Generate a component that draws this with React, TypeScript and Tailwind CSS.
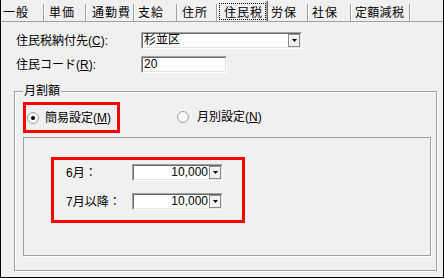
import React from "react";

const font = "font-['Liberation_Sans','Noto_Sans_CJK_JP',sans-serif]";

function Sep() {
  return <span className="w-[2px] h-[17px] self-end border-l border-[#a0a0a0] bg-white" />;
}

function Arrow() {
  return (
    <svg width="5" height="3" viewBox="0 0 5 3">
      <polygon points="0,0 5,0 2.5,3" fill="black" />
    </svg>
  );
}

function DropBtn() {
  return (
    <div className="w-[12px] h-full flex items-center justify-center bg-[#f0f0f0] border border-[#8a8a8a] shadow-[inset_1px_1px_0_white]">
      <Arrow />
    </div>
  );
}

function Field({
  className,
  children,
  btn,
  right,
}: {
  className: string;
  children: React.ReactNode;
  btn?: boolean;
  right?: boolean;
}) {
  return (
    <div
      className={`${className} h-[17px] border border-t-[#a0a0a0] border-l-[#a0a0a0] border-r-white border-b-white`}
    >
      <div className="h-full flex border border-t-[#696969] border-l-[#696969] border-r-[#e3e3e3] border-b-[#e3e3e3] bg-white">
        <div
          className={`flex-1 leading-[13px] px-[1px] ${right ? "text-right" : ""}`}
        >
          {children}
        </div>
        {btn && <DropBtn />}
      </div>
    </div>
  );
}

function Radio({ checked }: { checked?: boolean }) {
  return (
    <svg width="12" height="12" viewBox="0 0 12 12">
      <circle cx="6" cy="6" r="5.5" fill="#fcfcfc" stroke="#a0a0a0" />
      <circle cx="6" cy="6" r="4.5" fill="none" stroke="#e8e8e8" />
      {checked && <circle cx="6" cy="6" r="2" fill="black" />}
    </svg>
  );
}

export default function App() {
  return (
    <div
      className={`w-[444px] h-[278px] bg-[#f0f0f0] border-l border-r border-b border-black text-[12px] leading-[14px] text-black overflow-hidden ${font}`}
    >
      {/* tabs */}
      <div className="flex h-[22px] border-b border-[#a0a0a0] tracking-[1px] whitespace-nowrap">
        <div className="w-[42px] pl-[2px] pt-[6px]">一般</div>
        <Sep />
        <div className="w-[40px] pl-[4px] pt-[6px]">単価</div>
        <Sep />
        <div className="w-[46px] pl-[5px] pt-[6px]">通勤費</div>
        <Sep />
        <div className="w-[41px] pl-[3px] pt-[6px]">支給</div>
        <Sep />
        <div className="w-[38px] pl-[4px] pt-[6px]">住所</div>
        <Sep />
        <div className="w-[48px] pl-[1px] pt-[3px]">
          <div className="h-[17px] w-[47px] border border-dotted border-black pl-[4px] pt-[2px]">
            住民税
          </div>
        </div>
        <span className="w-[2px] h-[20px] self-end border-l border-[#a0a0a0] bg-[#696969]" />
        <div className="w-[39px] pl-[3px] pt-[6px]">労保</div>
        <Sep />
        <div className="w-[41px] pl-[3px] pt-[6px]">社保</div>
        <Sep />
        <div className="w-[57px] pl-[3px] pt-[6px] tracking-[0.3px]">定額減税</div>
        <Sep />
      </div>

      {/* top fields */}
      <div className="flex items-center ml-[15px] mt-[10px]">
        <div className="w-[125px]">
          住民税納付先(<u>C</u>):
        </div>
        <Field className="w-[161px]" btn>
          杉並区
        </Field>
      </div>
      <div className="flex items-center ml-[15px] mt-[7px]">
        <div className="w-[125px]">
          住民コード(<u>R</u>):
        </div>
        <Field className="w-[86px]">20</Field>
      </div>

      {/* group */}
      <div className="relative ml-[13px] mt-[18px] w-[423px] h-[180px] border border-[#a0a0a0] shadow-[inset_1px_1px_0_white,1px_1px_0_white]">
        <div className="absolute left-[8px] top-[-8px] px-[1px] bg-[#f0f0f0]">月割額</div>

        <div className="flex items-center mt-[10px]">
          <div className="ml-[8px] w-[97px] h-[31px] border-[3px] border-[#ff0000] flex items-center pl-[1px] gap-[6px]">
            <Radio checked />
            <span>
              簡易設定(<u>M</u>)
            </span>
          </div>
          <div className="ml-[57px] flex items-center gap-[8px] -mt-[2px]">
            <Radio />
            <span>
              月別設定(<u>N</u>)
            </span>
          </div>
        </div>

        <div className="ml-[8px] mt-[4px] w-[408px] h-[119px] border border-[#a0a0a0] shadow-[1px_1px_0_white]">
          <div className="ml-[27px] mt-[19px] w-[194px] h-[66px] border-[3px] border-[#ff0000] pt-[4px]">
            <div className="flex items-center">
              <div className="w-[78px] pl-[12px]">6月：</div>
              <Field className="w-[91px]" btn right>
                10,000
              </Field>
            </div>
            <div className="flex items-center mt-[12px]">
              <div className="w-[78px] pl-[12px] whitespace-nowrap">7月以降：</div>
              <Field className="w-[91px]" btn right>
                10,000
              </Field>
            </div>
          </div>
        </div>
      </div>
    </div>
  );
}
